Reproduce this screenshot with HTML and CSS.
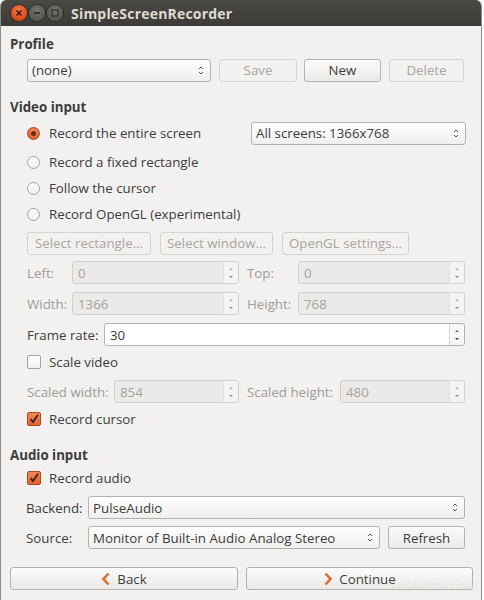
FILE: index.html
```html
<!DOCTYPE html>
<html>
<head>
<meta charset="utf-8">
<link rel="stylesheet" href="styles.css">
</head>
<body>
<div class="window">
  <div class="titlebar">
    <div class="wbtns">
      <span class="wb close"><svg width="8" height="8" viewBox="0 0 8 8"><path d="M1.5 1.5L6.5 6.5M6.5 1.5L1.5 6.5" stroke="#3a1a0c" stroke-width="1.6"/></svg></span>
      <span class="wb min"><svg width="8" height="8" viewBox="0 0 8 8"><path d="M1 4H7" stroke="#33322f" stroke-width="1.8"/></svg></span>
      <span class="wb max"><svg width="8" height="8" viewBox="0 0 8 8"><rect x="1" y="1" width="6" height="6" fill="none" stroke="#33322f" stroke-width="1.3"/></svg></span>
    </div>
    <div class="title">SimpleScreenRecorder</div>
  </div>
  <div class="content">
    <div class="heading h-profile">Profile</div>
    <div class="row row-profile">
      <div class="combo w-profile"><span>(none)</span><span class="carrow"><svg width="6" height="11" viewBox="0 0 6 11"><path d="M1 4L3 2L5 4M1 7L3 9L5 7" fill="none" stroke="#555" stroke-width="1"/></svg></span></div>
      <div class="btn dis w-save">Save</div>
      <div class="btn w-new">New</div>
      <div class="btn dis w-delete">Delete</div>
    </div>

    <div class="heading h-video">Video input</div>
    <div class="row radio-row r1">
      <span class="radio on"><span class="dot"></span></span>
      <span class="rlabel">Record the entire screen</span>
      <div class="combo w-screens"><span>All screens: 1366x768</span><span class="carrow"><svg width="6" height="11" viewBox="0 0 6 11"><path d="M1 4L3 2L5 4M1 7L3 9L5 7" fill="none" stroke="#555" stroke-width="1"/></svg></span></div>
    </div>
    <div class="row radio-row r2"><span class="radio"></span><span class="rlabel">Record a fixed rectangle</span></div>
    <div class="row radio-row r3"><span class="radio"></span><span class="rlabel">Follow the cursor</span></div>
    <div class="row radio-row r3"><span class="radio"></span><span class="rlabel">Record OpenGL (experimental)</span></div>

    <div class="row row-select">
      <div class="btn dis w-selrect">Select rectangle...</div>
      <div class="btn dis w-selwin">Select window...</div>
      <div class="btn dis w-opengl">OpenGL settings...</div>
    </div>

    <div class="row field-row fr-first">
      <span class="lbl dis w-l1">Left:</span>
      <div class="spin dis w-s1"><span class="sval">0</span><span class="sbtn"><i class="up"></i><i class="down"></i></span></div>
      <span class="lbl dis w-l2">Top:</span>
      <div class="spin dis w-s1"><span class="sval">0</span><span class="sbtn"><i class="up"></i><i class="down"></i></span></div>
    </div>
    <div class="row field-row">
      <span class="lbl dis w-l1">Width:</span>
      <div class="spin dis w-s1"><span class="sval">1366</span><span class="sbtn"><i class="up"></i><i class="down"></i></span></div>
      <span class="lbl dis w-l2">Height:</span>
      <div class="spin dis w-s1"><span class="sval">768</span><span class="sbtn"><i class="up"></i><i class="down"></i></span></div>
    </div>
    <div class="row field-row">
      <span class="lbl w-fr">Frame rate:</span>
      <div class="spin active w-frs"><span class="sval">30</span><span class="sbtn"><i class="up"></i><i class="down"></i></span></div>
    </div>
    <div class="row check-row cr-scale">
      <span class="check"></span><span class="clabel">Scale video</span>
    </div>
    <div class="row field-row fr-scaled">
      <span class="lbl dis w-sl1">Scaled width:</span>
      <div class="spin dis w-ss"><span class="sval">854</span><span class="sbtn"><i class="up"></i><i class="down"></i></span></div>
      <span class="lbl dis w-sl2">Scaled height:</span>
      <div class="spin dis w-ss"><span class="sval">480</span><span class="sbtn"><i class="up"></i><i class="down"></i></span></div>
    </div>
    <div class="row check-row cr-cursor">
      <span class="check on"><svg width="12" height="12" viewBox="0 0 12 12"><path d="M2.5 6.2L5 9L10 1.8" fill="none" stroke="#3b2116" stroke-width="1.8"/></svg></span><span class="clabel">Record cursor</span>
    </div>

    <div class="heading h-audio">Audio input</div>
    <div class="row check-row cr-audio">
      <span class="check on"><svg width="12" height="12" viewBox="0 0 12 12"><path d="M2.5 6.2L5 9L10 1.8" fill="none" stroke="#3b2116" stroke-width="1.8"/></svg></span><span class="clabel">Record audio</span>
    </div>
    <div class="row field-row fr-backend">
      <span class="lbl w-al">Backend:</span>
      <div class="combo w-backend"><span>PulseAudio</span><span class="carrow"><svg width="6" height="11" viewBox="0 0 6 11"><path d="M1 4L3 2L5 4M1 7L3 9L5 7" fill="none" stroke="#555" stroke-width="1"/></svg></span></div>
    </div>
    <div class="row field-row fr-source">
      <span class="lbl w-al">Source:</span>
      <div class="combo w-source"><span>Monitor of Built-in Audio Analog Stereo</span><span class="carrow"><svg width="6" height="11" viewBox="0 0 6 11"><path d="M1 4L3 2L5 4M1 7L3 9L5 7" fill="none" stroke="#555" stroke-width="1"/></svg></span></div>
      <div class="btn w-refresh">Refresh</div>
    </div>

    <div class="row nav-row">
      <div class="btn w-back"><svg class="chev" width="10" height="14" viewBox="0 0 10 14"><path d="M7.5 1.5L2.5 7L7.5 12.5" fill="none" stroke="#e06a34" stroke-width="2.6"/></svg>Back</div>
      <div class="btn w-cont"><svg class="chev" width="10" height="14" viewBox="0 0 10 14"><path d="M2.5 1.5L7.5 7L2.5 12.5" fill="none" stroke="#e06a34" stroke-width="2.6"/></svg>Continue</div>
    </div>
  </div>
  <div class="watermark">TecAdmin.net</div>
</div>
</body>
</html>
```

FILE: styles.css
```css
html, body {
  margin: 0;
  padding: 0;
  background: #ffffff;
}
body {
  font-family: "Open Sans", "DejaVu Sans", sans-serif;
  font-size: 13.3px;
  color: #3c3c3c;
}
.window {
  position: relative;
  width: 480px;
  height: 600px;
  background: #f2f1f0;
  border-left: 1px solid #8f8c87;
  border-right: 1px solid #8f8c87;
  border-radius: 6px 6px 0 0;
  overflow: hidden;
  box-sizing: content-box;
}
.titlebar {
  height: 26px;
  background: linear-gradient(#4a4945, #3c3b37);
  display: flex;
  align-items: center;
}
.wbtns {
  display: flex;
  gap: 2px;
  margin-left: 10px;
  width: 60px;
}
.wb {
  width: 16px;
  height: 16px;
  border-radius: 50%;
  display: flex;
  align-items: center;
  justify-content: center;
}
.wb.close {
  background: radial-gradient(circle at 50% 35%, #f47c4c, #dd4814 70%);
  box-shadow: 0 0 0 1px #2e2d2a;
}
.wb.min, .wb.max {
  background: radial-gradient(circle at 50% 35%, #76746f, #57564f 70%);
  box-shadow: 0 0 0 1px #2e2d2a;
}
.title {
  color: #dfdbd2;
  font-weight: bold;
  font-size: 14px;
  letter-spacing: 0.2px;
}
.content {
  padding: 0 7px 0 9px;
}
.heading {
  font-weight: bold;
  height: 18px;
  line-height: 18px;
}
.h-profile { margin-top: 9px; }
.h-video { margin-top: 16px; }
.h-audio { margin-top: 17px; }
.row {
  display: flex;
  align-items: center;
}
.row-profile {
  margin-top: 5px;
  padding-left: 17px;
  height: 24px;
}
.combo {
  height: 23px;
  box-sizing: border-box;
  border: 1px solid #b5b2ad;
  border-radius: 3px;
  background: linear-gradient(#ffffff, #efeeec);
  display: flex;
  align-items: center;
  justify-content: space-between;
  padding: 0 6px 0 4px;
  white-space: nowrap;
}
.carrow { display: flex; align-items: center; }
.btn {
  height: 23px;
  box-sizing: border-box;
  border: 1px solid #b5b2ad;
  border-radius: 3px;
  background: linear-gradient(#fbfbfa, #ebeae8);
  display: flex;
  align-items: center;
  justify-content: center;
  white-space: nowrap;
}
.btn.dis {
  border-color: #d6d3ce;
  background: #f2f1f0;
  color: #a9a5a0;
}
.w-profile { width: 184px; margin-right: 8px; }
.w-save { width: 78px; margin-right: 7px; }
.w-new { width: 77px; margin-right: 8px; }
.w-delete { width: 75px; }

.radio-row {
  padding-left: 17px;
  height: 24px;
}
.r1 { margin-top: 5px; }
.r2 { margin-top: 5px; }
.r3 { margin-top: 2px; }
.radio {
  width: 13px;
  height: 13px;
  box-sizing: border-box;
  border-radius: 50%;
  border: 1px solid #a6a39e;
  background: linear-gradient(#ffffff, #f0efee);
  display: flex;
  align-items: center;
  justify-content: center;
  margin-right: 9px;
}
.radio.on {
  border-color: #a9491e;
  background: radial-gradient(circle at 50% 35%, #f79067, #e2622e 75%);
}
.dot {
  width: 5px;
  height: 5px;
  border-radius: 50%;
  background: #6b2a0e;
}
.rlabel { white-space: nowrap; }
.w-screens { width: 215px; margin-left: auto; margin-right: 8px; }

.row-select {
  margin-top: 5px;
  padding-left: 17px;
  height: 24px;
  gap: 9px;
}
.w-selrect { width: 124px; }
.w-selwin { width: 113px; }
.w-opengl { width: 127px; }

.field-row {
  padding-left: 17px;
  height: 23px;
  margin-top: 8px;
}
.fr-first { margin-top: 6px; }
.lbl { white-space: nowrap; }
.lbl.dis { color: #a09c97; }
.spin {
  height: 23px;
  box-sizing: border-box;
  border: 1px solid #b5b2ad;
  border-radius: 3px;
  background: #ffffff;
  display: flex;
  align-items: stretch;
}
.spin.dis {
  border-color: #d3d0cb;
  background: #ebeae8;
  color: #a6a29d;
}
.sval {
  flex: 1;
  display: flex;
  align-items: center;
  padding-left: 5px;
}
.sbtn {
  width: 14px;
  border-left: 1px solid #e2e0dd;
  display: flex;
  flex-direction: column;
  align-items: center;
  justify-content: center;
  gap: 6px;
  background: #f4f3f2;
  border-radius: 0 3px 3px 0;
}
.spin.active .sbtn { background: #f8f8f7; border-left-color: #d6d4d0; }
.sbtn i {
  display: block;
  width: 0;
  height: 0;
  border-left: 2.5px solid transparent;
  border-right: 2.5px solid transparent;
}
.sbtn i.up { border-bottom: 2px solid #b2aea9; }
.sbtn i.down { border-top: 2px solid #8e8a85; }
.spin.active .sbtn i.up { border-bottom-color: #6a6762; }
.spin.active .sbtn i.down { border-top-color: #3c3b37; }
.w-l1 { width: 45px; }
.w-s1 { width: 167px; }
.w-l2 { width: 51px; margin-left: 8px; }
.w-fr { width: 77px; }
.w-frs { width: 361px; }
.w-sl1 { width: 87px; }
.w-ss { width: 125px; }
.w-sl2 { width: 93px; margin-left: 8px; }

.check-row {
  padding-left: 17px;
  height: 20px;
}
.cr-scale { margin-top: 6px; }
.fr-scaled { margin-top: 8px; }
.cr-cursor { margin-top: 6px; }
.cr-audio { margin-top: 4px; }
.check {
  width: 14px;
  height: 14px;
  box-sizing: border-box;
  border: 1px solid #a6a39e;
  border-radius: 2px;
  background: linear-gradient(#ffffff, #f0efee);
  margin-right: 8px;
  display: flex;
  align-items: center;
  justify-content: center;
}
.check.on {
  border-color: #a9491e;
  background: linear-gradient(#f5875a, #e1622f);
}
.clabel { white-space: nowrap; }
.fr-backend { margin-top: 8px; padding-left: 16px; }
.fr-source { margin-top: 7px; padding-left: 16px; }
.w-al { width: 62px; }
.w-backend { width: 377px; }
.w-source { width: 292px; margin-right: 8px; }
.w-refresh { width: 77px; }

.nav-row {
  margin-top: 18px;
  height: 23px;
  padding-left: 0;
  gap: 8px;
}
.w-back { width: 228px; }
.w-cont { width: 227px; }
.chev { margin-right: 6px; }

.watermark {
  position: absolute;
  left: 388px;
  top: 576px;
  font-size: 14px;
  color: rgba(215, 213, 210, 0.35);
  white-space: nowrap;
}
```
